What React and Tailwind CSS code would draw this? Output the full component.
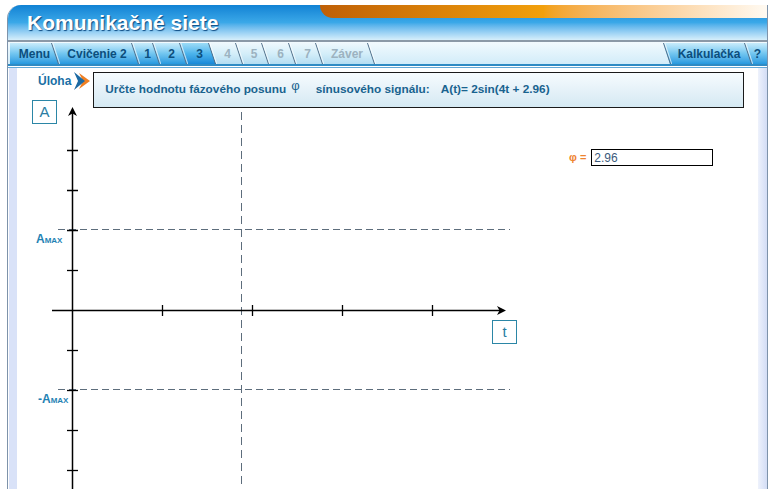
import React from 'react';

const leftTabs = [
  { label: 'Menu', w: 'w-[49px]', first: true },
  { label: 'Cvičenie 2', w: 'w-[87px]' },
  { label: '1', w: 'w-[28px]' },
  { label: '2', w: 'w-[34px]' },
  { label: '3', w: 'w-[36px]', current: true },
  { label: '4', w: 'w-[34px]', off: true },
  { label: '5', w: 'w-[33px]', off: true },
  { label: '6', w: 'w-[34px]', off: true },
  { label: '7', w: 'w-[34px]', off: true },
  { label: 'Záver', w: 'w-[59px]', off: true },
];

const Slash = ({ side }) => (
  <svg
    width="9"
    height="21"
    className={`absolute top-0 z-10 ${side === 'left' ? 'left-0' : 'right-[-1px]'}`}
  >
    <line x1="0.5" y1="0" x2="7.5" y2="21" stroke="#52708a" strokeWidth="1" />
    <line x1="1.8" y1="0" x2="8.8" y2="21" stroke="#ffffff" strokeOpacity="0.7" strokeWidth="1" />
  </svg>
);

const Tab = ({ label, w, first, current, off, last, leftLine }) => {
  let clip = '[clip-path:polygon(0_0,calc(100%-7px)_0,100%_100%,7px_100%)]';
  if (first) clip = '[clip-path:polygon(0_0,calc(100%-7px)_0,100%_100%,0_100%)]';
  if (last) clip = '[clip-path:polygon(0_0,100%_0,100%_100%,7px_100%)]';

  let bg = 'bg-gradient-to-b from-[#c8ecfb] via-[#72c6f0] to-[#2499df]';
  if (current) bg = 'bg-gradient-to-b from-[#9cdcf7] via-[#4cb4ec] to-[#1689d9]';
  if (off) bg = 'bg-gradient-to-b from-[#eef8fd] via-[#d4eef9] to-[#b4ddf2]';

  return (
    <div className={`relative h-[21px] shrink-0 ${w} ${first ? '' : '-ml-[7px]'}`}>
      <div
        className={`flex h-full items-center justify-center ${first ? '' : 'pl-[3px]'} ${bg} ${clip} text-[12px] font-bold ${
          off ? 'text-[#9cb2c0]' : 'text-[#0c4e7d]'
        }`}
      >
        {label}
      </div>
      {leftLine && <Slash side="left" />}
      {!last && <Slash side="right" />}
    </div>
  );
};

const Chart = () => (
  <svg width="502" height="393" className="block">
    <g stroke="#5d6d7c" strokeWidth="1" fill="none">
      <line x1="41" y1="133.5" x2="493" y2="133.5" strokeDasharray="7 4" />
      <line x1="41" y1="293.5" x2="493" y2="293.5" strokeDasharray="7 4" />
      <line x1="224.5" y1="16" x2="224.5" y2="393" strokeDasharray="8 5" />
    </g>
    <g stroke="#000" strokeWidth="1.5">
      <line x1="55.5" y1="16" x2="55.5" y2="393" />
      <line x1="35" y1="214.5" x2="484" y2="214.5" />
    </g>
    <g stroke="#000" strokeWidth="1.3">
      {[54, 94, 134, 174, 254, 294, 334, 374].map((y) => (
        <line key={y} x1="50" y1={y + 0.5} x2="61" y2={y + 0.5} />
      ))}
      {[145, 235, 325, 415].map((x) => (
        <line key={x} x1={x + 0.5} y1="209" x2={x + 0.5} y2="220" />
      ))}
    </g>
    <polygon points="489,214.5 480,210 482.5,214.5 480,219" fill="#000" />
    <polygon points="55.5,11 51,20 55.5,17.5 60,20" fill="#000" />
  </svg>
);

const App = () => {
  return (
    <div className="w-[784px] h-[489px] overflow-hidden bg-white pt-[5px] pl-[7px] font-['Liberation_Sans',Arial,sans-serif]">
      <div className="flex h-full w-[761px] flex-col overflow-hidden rounded-tl-[14px] border-x border-[#7e93aa]">
        {/* Header */}
        <div className="relative h-[37px] shrink-0 border-b-2 border-[#8b99a7] bg-gradient-to-b from-[#0f82d4] via-[#3aa8e8] to-[#d6effb] pl-[19px] pt-[6px]">
          <div className="absolute right-0 top-0 left-[312px] h-[13px] rounded-bl-[16px] bg-gradient-to-r from-[#bf5f06] via-[#f2a00c] to-[#fffaf2]" />
          <h1 className="relative text-[21px] leading-[24px] font-bold text-white [text-shadow:1px_1px_1px_#0b4a82]">
            Komunikačné siete
          </h1>
        </div>

        {/* Tabs */}
        <div className="flex h-[22px] shrink-0 bg-gradient-to-b from-[#f2fafe] to-[#d2ecf9] pl-[2px] pt-[1px]">
          {leftTabs.map((t) => (
            <Tab key={t.label} {...t} />
          ))}
          <div className="ml-auto flex">
            <Tab label="Kalkulačka" w="w-[89px]" first={false} leftLine />
            <Tab label="?" w="w-[22px]" last />
          </div>
        </div>
        <div className="h-[2px] shrink-0 bg-[#2f8bc4]" />
        <div className="h-px shrink-0 bg-white" />
        <div className="h-px shrink-0 bg-[#64a8d6]" />

        {/* Content */}
        <div className="flex min-h-0 flex-1">
          <div className="w-[9px] shrink-0 border-l border-white bg-[#d9e2f8]" />

          <div className="flex-1 pt-[4px]">
            <div className="flex items-start pl-[21px]">
              <span className="mt-[2px] text-[12px] leading-[14px] font-bold text-[#1a6fa5]">Úloha</span>
              <svg width="17" height="18" className="ml-[2px] shrink-0">
                <polygon points="6,1 17,9 6,17 10,9" fill="#ef7f22" />
                <polygon points="1,0 12,9 1,18 5,9" fill="#1c6aa3" />
              </svg>
              <div className="ml-[3px] flex h-[36px] w-[651px] items-center border border-[#1a1a1a] bg-gradient-to-b from-[#f6fbfe] to-[#d5e9f3] pl-[11px] text-[11.8px] font-bold text-[#19638f]">
                <span>Určte hodnotu fázového posunu</span>
                <span className="ml-[5px] -mt-[9px] text-[13px] font-normal">φ</span>
                <span className="ml-[16px]">sínusového signálu:</span>
                <span className="ml-[11px]">A(t)= 2sin(4t + 2.96)</span>
              </div>
            </div>

            <div className="-mt-[12px] flex">
              <div className="relative h-[393px] w-[502px] shrink-0">
                <Chart />
                <div className="absolute left-[15px] top-[4px] flex h-[24px] w-[25px] items-center justify-center border border-[#2b86a6] bg-white text-[15px] text-[#2a7da3]">
                  A
                </div>
                <div className="absolute left-[475px] top-[224px] flex h-[24px] w-[25px] items-center justify-center border border-[#2b86a6] bg-white text-[15px] text-[#2a7da3]">
                  t
                </div>
                <div className="absolute left-[19px] top-[134px] font-bold leading-none text-[#1f82b4]">
                  <span className="text-[12px]">A</span>
                  <span className="text-[8px]">MAX</span>
                </div>
                <div className="absolute left-[21px] top-[294px] font-bold leading-none text-[#1f82b4]">
                  <span className="text-[12px]">-A</span>
                  <span className="text-[8px]">MAX</span>
                </div>
              </div>

              <div className="flex items-center self-start pl-[50px] pt-[53px]">
                <span className="text-[11px] font-bold text-[#ee8430]">φ =</span>
                <div className="ml-[5px] flex h-[17px] w-[122px] items-center border border-black bg-white pl-[2px] text-[12px] text-[#3a5a7c]">
                  2.96
                </div>
              </div>
            </div>
          </div>

          <div className="w-[9px] shrink-0 bg-gradient-to-r from-[#eef2fc] to-[#d3ddf5]" />
        </div>
      </div>
    </div>
  );
};

export default App;
